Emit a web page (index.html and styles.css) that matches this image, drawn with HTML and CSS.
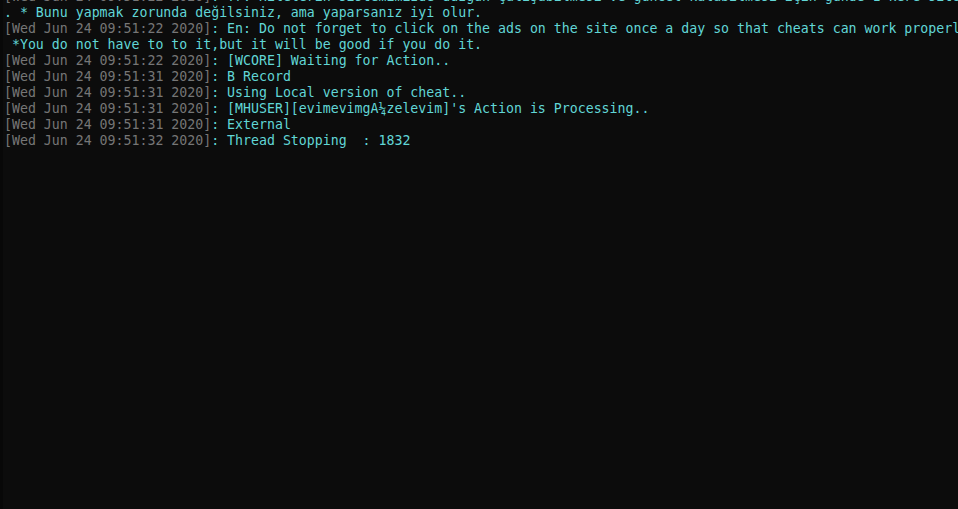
FILE: index.html
```html
<!DOCTYPE html>
<html lang="tr">
<head>
<meta charset="utf-8">
<title>Console</title>
<link rel="stylesheet" href="styles.css">
</head>
<body>
<div class="console">
  <div class="log">
<div class="line"><span class="ts">[Wed Jun 24 09:51:22 2020]</span><span class="msg">: Tr: Hilelerin sistemimizde düzgün çalışabilmesi ve güncel kalabilmesi için günde 1 kere sitedeki reklamlara tıklamayı unutmayın</span></div>
<div class="line"><span class="msg">. * Bunu yapmak zorunda değilsiniz, ama yaparsanız iyi olur.</span></div>
<div class="line"><span class="ts">[Wed Jun 24 09:51:22 2020]</span><span class="msg">: En: Do not forget to click on the ads on the site once a day so that cheats can work properly</span></div>
<div class="line"><span class="msg"> *You do not have to to it,but it will be good if you do it.</span></div>
<div class="line"><span class="ts">[Wed Jun 24 09:51:22 2020]</span><span class="msg">: [WCORE] Waiting for Action..</span></div>
<div class="line"><span class="ts">[Wed Jun 24 09:51:31 2020]</span><span class="msg">: B Record</span></div>
<div class="line"><span class="ts">[Wed Jun 24 09:51:31 2020]</span><span class="msg">: Using Local version of cheat..</span></div>
<div class="line"><span class="ts">[Wed Jun 24 09:51:31 2020]</span><span class="msg">: [MHUSER][evimevimgÃ¼zelevim]'s Action is Processing..</span></div>
<div class="line"><span class="ts">[Wed Jun 24 09:51:31 2020]</span><span class="msg">: External</span></div>
<div class="line"><span class="ts">[Wed Jun 24 09:51:32 2020]</span><span class="msg">: Thread Stopping  : 1832</span></div>
  </div>
</div>
</body>
</html>
```

FILE: styles.css
```css
html, body {
  margin: 0;
  padding: 0;
  width: 958px;
  height: 509px;
  overflow: hidden;
  background: #0c0c0c;
}

.console {
  box-sizing: border-box;
  width: 958px;
  height: 509px;
  overflow: hidden;
  border-left: 3px solid #080808;
  background: #0c0c0c;
  padding-left: 1px;
}

.log {
  margin-top: -11px;
  font-family: "DejaVu Sans Mono", "Liberation Mono", monospace;
  font-size: 13.24px;
  line-height: 16px;
  color: #61d6d6;
}

.line {
  white-space: pre;
  overflow: hidden;
  height: 16px;
}

.ts {
  color: #767676;
}

.msg {
  color: #61d6d6;
}
```
